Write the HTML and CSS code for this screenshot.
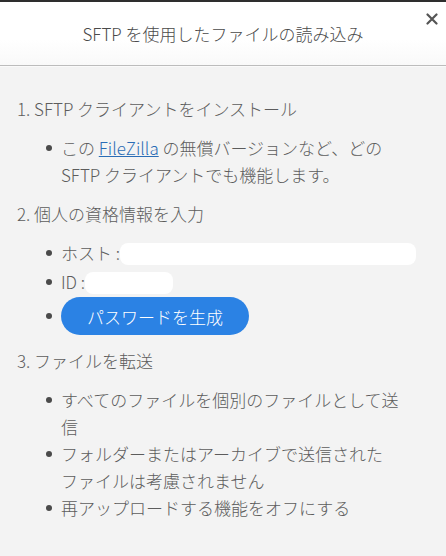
FILE: index.html
```html
<!DOCTYPE html>
<html lang="ja">
<head>
    <meta charset="UTF-8">
    <meta name="viewport" content="width=device-width, initial-scale=1.0">
    <title>SFTP を使用したファイルの読み込み</title>
    <link rel="stylesheet" href="styles.css">
</head>
<body>
    <div class="dialog">
        <div class="dialog-header">
            <h1 class="dialog-title">SFTP を使用したファイルの読み込み</h1>
            <button class="close-btn" aria-label="閉じる">
                <svg width="12" height="12" viewBox="0 0 12 12">
                    <path d="M1.5 1.5 L10.5 10.5 M10.5 1.5 L1.5 10.5" stroke="#555" stroke-width="2.2" stroke-linecap="round"/>
                </svg>
            </button>
        </div>

        <div class="dialog-body">
            <!-- Step 1 -->
            <h2 class="step">1. SFTP クライアントをインストール</h2>
            <ul class="step-list">
                <li>この <a href="#">FileZilla</a> の無償バージョンなど、どの SFTP クライアントでも機能します。</li>
            </ul>

            <!-- Step 2 -->
            <h2 class="step">2. 個人の資格情報を入力</h2>
            <ul class="step-list">
                <li class="cred">ホスト : <span class="cred-value host"></span></li>
                <li class="cred">ID : <span class="cred-value id"></span></li>
                <li class="cred btn-row"><button class="gen-btn">パスワードを生成</button></li>
            </ul>

            <!-- Step 3 -->
            <h2 class="step">3. ファイルを転送</h2>
            <ul class="step-list">
                <li>すべてのファイルを個別のファイルとして送信</li>
                <li>フォルダーまたはアーカイブで送信されたファイルは考慮されません</li>
                <li>再アップロードする機能をオフにする</li>
            </ul>
        </div>
    </div>
</body>
</html>
```

FILE: styles.css
```css
* {
    margin: 0;
    padding: 0;
    box-sizing: border-box;
}

html, body {
    overflow: hidden;
}

body {
    font-family: "Noto Sans CJK JP", "Noto Sans", sans-serif;
    font-weight: 300;
    background: #f3f3f3;
    color: #5c5c5c;
    border-top: 2px solid #2e2e2e;
}

.dialog-header {
    position: relative;
    height: 64px;
    background: linear-gradient(#ffffff 60%, #f9f9f9);
    border-bottom: 1px solid #bcbcbc;
    display: flex;
    justify-content: center;
    align-items: center;
}

.dialog-title {
    font-size: 17px;
    font-weight: 300;
    color: #4a4a4a;
    margin-top: -1px;
}

.close-btn {
    position: absolute;
    top: 11px;
    right: 8px;
    width: 12px;
    height: 12px;
    border: none;
    background: none;
    cursor: pointer;
    display: flex;
}

.dialog-body {
    padding: 28px 41px 20px 17px;
    border-top: 1px solid #fafafa;
}

.step {
    font-size: 17px;
    font-weight: 300;
    line-height: 27px;
    color: #5c5c5c;
}

.step-list {
    list-style: none;
    margin: 12px 0 12px;
    padding-left: 44px;
    line-break: strict;
}

.step-list li {
    position: relative;
    font-size: 17px;
    line-height: 27px;
}

.step-list li::before {
    content: "";
    position: absolute;
    left: -15px;
    top: 11px;
    width: 6px;
    height: 6px;
    border-radius: 50%;
    background: #4a4a4a;
}

.step-list a {
    color: #2a6cb5;
    text-decoration: underline;
}

.cred {
    min-height: 29px;
    line-height: 29px;
    white-space: nowrap;
}

.cred-value {
    display: inline-block;
    vertical-align: middle;
    height: 22px;
    background: #fff;
    border-radius: 8px;
    margin-left: -4px;
    margin-top: -3px;
}

.cred-value.host {
    width: 296px;
}

.cred-value.id {
    width: 88px;
}

.step-list li.btn-row::before {
    top: 16px;
}

.gen-btn {
    display: block;
    height: 38px;
    padding: 0 26px;
    border: none;
    border-radius: 19px;
    background: #2b82e4;
    color: #fff;
    font-family: "Noto Sans CJK JP", "Noto Sans", sans-serif;
    font-weight: 300;
    font-size: 17px;
    cursor: pointer;
}
```
